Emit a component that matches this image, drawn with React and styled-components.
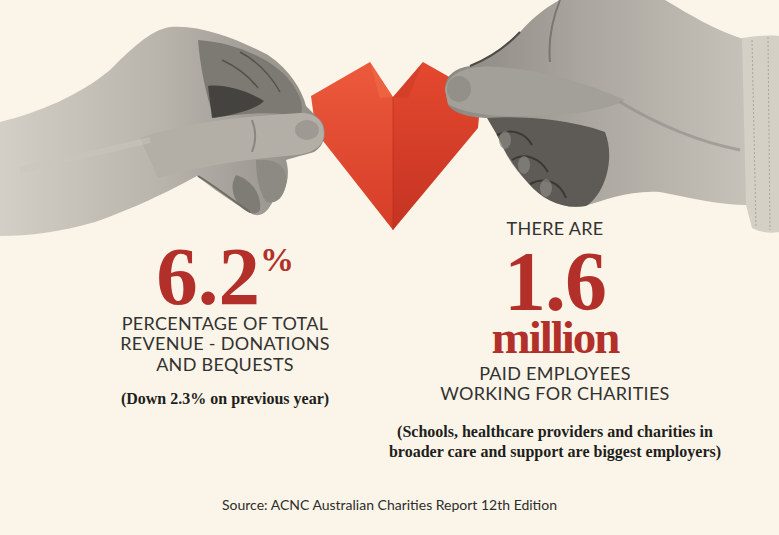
import React from "react";
import styled, { createGlobalStyle } from "styled-components";

const GlobalStyle = createGlobalStyle`
  html, body { margin: 0; padding: 0; background: #faf5e8; }
  #root { width: 779px; height: 535px; }
`;

const Page = styled.main`
  width: 779px;
  height: 535px;
  overflow: hidden;
  background: #faf5e8;
  display: flex;
  flex-direction: column;
`;

const Illustration = styled.svg`
  display: block;
  flex: none;
  width: 779px;
  height: 240px;
  margin-bottom: -22px;
`;

const Stats = styled.section`
  display: grid;
  grid-template-columns: 250px 350px;
  column-gap: 30px;
  padding-left: 100px;
  align-items: start;
  position: relative;
`;

const Column = styled.div`
  display: flex;
  flex-direction: column;
  align-items: center;
  text-align: center;
  padding-top: ${(p) => p.$offset || 0}px;
`;

const Label = styled.div`
  font-family: "Lato", "Liberation Sans", sans-serif;
  font-weight: 400;
  font-size: 18px;
  letter-spacing: 0.3px;
  line-height: ${(p) => p.$lh || 20.5}px;
  color: #333230;
  text-transform: uppercase;
  margin-top: ${(p) => p.$mt || 0}px;
  white-space: nowrap;
`;

const BigNumber = styled.div`
  font-family: "Liberation Serif", "DejaVu Serif", serif;
  font-weight: 700;
  font-size: ${(p) => p.$size}px;
  line-height: ${(p) => p.$lh}px;
  letter-spacing: ${(p) => p.$ls || 0}px;
  color: #b3302a;
  margin-top: ${(p) => p.$mt || 0}px;
  white-space: nowrap;
`;

const Sup = styled.span`
  font-size: 34px;
  line-height: 0;
  vertical-align: 33px;
  margin-left: 0;
`;

const Note = styled.p`
  margin: ${(p) => p.$mt || 0}px 0 0;
  font-family: "Liberation Serif", "DejaVu Serif", serif;
  font-weight: 700;
  font-size: 16px;
  line-height: 20px;
  color: #1f1e1c;
  white-space: nowrap;
`;

const Source = styled.footer`
  margin-top: 35px;
  text-align: center;
  font-family: "Lato", "Liberation Sans", sans-serif;
  font-size: 14px;
  line-height: 16px;
  color: #2e2d2b;
`;

function HandsAndHeart() {
  return (
    <Illustration viewBox="0 0 779 240" aria-hidden="true">
      <defs>
        <linearGradient id="lh" x1="0" y1="0" x2="1" y2="0">
          <stop offset="0" stopColor="#d3cfc6" />
          <stop offset="0.5" stopColor="#b8b4ac" />
          <stop offset="1" stopColor="#8f8b85" />
        </linearGradient>
        <linearGradient id="rh" x1="0" y1="0" x2="1" y2="0">
          <stop offset="0" stopColor="#8a8680" />
          <stop offset="0.45" stopColor="#aaa69f" />
          <stop offset="1" stopColor="#c6c2b9" />
        </linearGradient>
        <linearGradient id="hl" x1="0" y1="0" x2="0" y2="1">
          <stop offset="0" stopColor="#ec5a3c" />
          <stop offset="1" stopColor="#d63d27" />
        </linearGradient>
        <linearGradient id="hr" x1="0" y1="0" x2="0" y2="1">
          <stop offset="0" stopColor="#e4492f" />
          <stop offset="1" stopColor="#c53322" />
        </linearGradient>
      </defs>

      {/* heart */}
      <polygon points="393,97 370,62 311,96 316,132 393,230" fill="url(#hl)" />
      <polygon points="393,97 423,62 481,95 478,128 393,230" fill="url(#hr)" />
      <polygon points="370,62 393,97 380,98" fill="#f06a48" opacity="0.6" />
      <polygon points="423,62 393,97 408,98" fill="#c93a25" opacity="0.5" />
      <line x1="393" y1="97" x2="393" y2="230" stroke="#b52d1d" strokeWidth="1" opacity="0.6" />

      {/* left hand */}
      <path
        d="M0,122 C40,112 80,95 110,70 C130,50 150,30 170,27 C200,24 240,40 268,55 C290,70 302,90 306,106 L318,118 C328,125 327,145 314,152 C300,156 292,158 286,160 C291,176 286,196 273,201 C268,211 262,218 252,214 C232,202 212,188 197,176 C170,191 130,210 95,222 C60,232 30,236 0,236 Z"
        fill="url(#lh)"
      />
      <path
        d="M198,40 C230,42 265,55 286,76 C300,92 305,106 300,116 C278,112 248,112 214,118 C206,95 200,66 198,40 Z"
        fill="#7d7a74"
      />
      <path d="M208,86 C224,84 246,90 264,101 C256,109 236,115 212,118 Z" fill="#45433f" />
      <path d="M222,60 C235,66 248,75 258,88 M240,52 C255,60 270,74 280,92" stroke="#55524d" strokeWidth="1.5" fill="none" />
      <path
        d="M140,138 C185,122 250,116 300,113 C318,112 327,125 323,140 C319,152 302,155 286,156 C250,159 200,166 158,178 Z"
        fill="#b3afa7"
      />
      <ellipse cx="307" cy="130" rx="12" ry="10" fill="#9e9a93" />
      <path d="M252,120 C256,130 256,142 252,152" stroke="#8a8781" strokeWidth="2" fill="none" />
      <path d="M256,160 C276,158 289,166 286,185 C283,199 276,204 266,202 C259,190 256,176 256,160 Z" fill="#8d8a84" />
      <path d="M236,175 C252,180 262,195 260,210 C256,216 248,214 240,206 C232,196 230,185 236,175 Z" fill="#7f7c76" />
      <path d="M198,176 C215,186 232,200 250,212" stroke="#6f6c67" strokeWidth="2" fill="none" />
      <path d="M20,170 C60,160 110,150 150,140" stroke="#c9c5bc" strokeWidth="6" fill="none" opacity="0.5" />

      {/* right hand */}
      <path
        d="M445,88 C446,75 455,68 470,66 C490,60 505,45 520,32 C535,15 550,5 560,0 L665,0 C690,15 715,30 746,40 L746,205 C720,205 690,198 660,192 C630,190 605,200 585,206 C565,210 545,200 530,185 C515,170 505,155 500,140 C495,130 492,122 488,118 C475,118 455,115 448,105 Z"
        fill="url(#rh)"
      />
      <path
        d="M487,118 C520,116 565,118 605,132 C616,160 604,195 586,206 C562,210 542,199 529,184 C513,166 503,149 497,135 Z"
        fill="#5e5b57"
      />
      <path d="M497,135 C510,128 525,132 532,145 M512,160 C525,152 540,158 548,172 M530,184 C545,176 560,182 566,198" stroke="#3b3936" strokeWidth="2" fill="none" />
      <ellipse cx="505" cy="140" rx="6" ry="9" fill="#8a8782" opacity="0.7" />
      <ellipse cx="524" cy="165" rx="6" ry="9" fill="#8a8782" opacity="0.7" />
      <ellipse cx="546" cy="188" rx="6" ry="9" fill="#8a8782" opacity="0.7" />
      <path
        d="M445,90 C447,72 470,64 500,67 C540,70 585,82 625,100 C605,112 562,116 522,116 C490,117 460,112 448,104 Z"
        fill="#a3a099"
      />
      <ellipse cx="459" cy="89" rx="12" ry="13" fill="#93908a" />
      <path d="M520,32 C505,48 490,58 470,66" stroke="#4d4b47" strokeWidth="2" fill="none" />
      <path d="M560,0 C552,20 548,40 550,62" stroke="#7a7772" strokeWidth="2" fill="none" />
      <path d="M620,102 C650,120 690,140 740,150" stroke="#8f8b85" strokeWidth="3" fill="none" opacity="0.6" />

      {/* sleeve */}
      <path d="M742,38 C755,36 770,35 779,36 L779,232 C770,234 760,232 752,228 L746,205 Z" fill="#d4d0c6" />
      <path d="M752,40 L756,226 M768,37 L770,230" stroke="#a9a59d" strokeWidth="1" strokeDasharray="2 2" fill="none" />
    </Illustration>
  );
}

export default function App() {
  return (
    <>
      <GlobalStyle />
      <Page>
        <HandsAndHeart />
        <Stats>
          <Column $offset={27.7}>
            <BigNumber $size={83} $lh={60}>
              6.2<Sup>%</Sup>
            </BigNumber>
            <Label $mt={7}>
              Percentage of total
              <br />
              revenue - donations
              <br />
              and bequests
            </Label>
            <Note $mt={14.4}>(Down 2.3% on previous year)</Note>
          </Column>
          <Column>
            <Label $lh={20}>There are</Label>
            <BigNumber $size={84} $lh={60} $mt={13.7} $ls={-1}>
              1.6
            </BigNumber>
            <BigNumber $size={47} $lh={36} $mt={7.4} $ls={-2}>
              million
            </BigNumber>
            <Label $mt={7.9} $lh={20}>
              Paid employees
              <br />
              working for charities
            </Label>
            <Note $mt={18.6}>
              (Schools, healthcare providers and charities in
              <br />
              broader care and support are biggest employers)
            </Note>
          </Column>
        </Stats>
        <Source>Source: ACNC Australian Charities Report 12th Edition</Source>
      </Page>
    </>
  );
}
